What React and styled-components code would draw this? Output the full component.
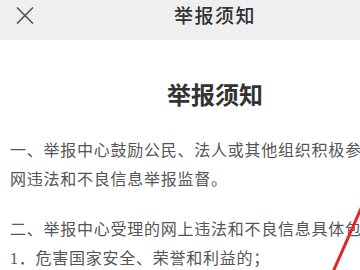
import React from 'react';
import styled, { createGlobalStyle } from 'styled-components';

const GlobalStyle = createGlobalStyle`
  html, body {
    margin: 0;
    padding: 0;
    background: #fff;
    overflow: hidden;
  }
  body {
    font-family: "Noto Sans CJK SC", "Noto Sans", sans-serif;
  }
`;

const Screen = styled.div`
  position: relative;
  width: 360px;
  height: 270px;
  overflow: hidden;
`;

const Page = styled.div`
  width: 430px;
`;

const TopBar = styled.header`
  display: grid;
  grid-template-columns: 1fr auto 1fr;
  align-items: center;
  height: 30px;
  padding: 0 16px 10px;
  background: #efefef;
`;

const CloseButton = styled.button`
  display: flex;
  align-items: center;
  justify-content: flex-start;
  width: 24px;
  height: 24px;
  padding: 0;
  border: 0;
  background: none;
`;

const BarTitle = styled.h1`
  margin: 0;
  font-size: 19px;
  font-weight: 500;
  letter-spacing: 1.5px;
  color: #333;
  line-height: 30px;
`;

const Article = styled.article`
  padding: 0 10px;
`;

const Heading = styled.h2`
  margin: 37px 0 26px;
  text-align: center;
  font-size: 24px;
  line-height: 34px;
  font-weight: 700;
  color: #333;
`;

const Para = styled.p`
  margin: 0 0 22px;
  font-family: "Liberation Serif", "Noto Sans CJK SC", serif;
  font-size: 16px;
  letter-spacing: 0.75px;
  line-height: 28.5px;
  color: #555;
`;

const Mark = styled.svg`
  position: absolute;
  left: 0;
  top: 0;
  pointer-events: none;
`;

const CloseIcon = () => (
  <svg width="18" height="17" viewBox="0 0 18 17">
    <path d="M1 0.5 L17 16.5 M17 0.5 L1 16.5" stroke="#555" strokeWidth="1.6" fill="none" />
  </svg>
);

export default function App() {
  return (
    <Screen>
      <GlobalStyle />
      <Page>
        <TopBar>
          <CloseButton aria-label="关闭">
            <CloseIcon />
          </CloseButton>
          <BarTitle>举报须知</BarTitle>
          <span />
        </TopBar>
        <Article>
          <Heading>举报须知</Heading>
          <Para>一、举报中心鼓励公民、法人或其他组织积极参与互联网违法和不良信息举报监督。</Para>
          <Para>
            二、举报中心受理的网上违法和不良信息具体包括：
            <br />
            1．危害国家安全、荣誉和利益的；
          </Para>
        </Article>
      </Page>
      <Mark width="360" height="270" viewBox="0 0 360 270">
        <line x1="363" y1="204" x2="333" y2="272" stroke="#e3262a" strokeWidth="3" />
      </Mark>
    </Screen>
  );
}
